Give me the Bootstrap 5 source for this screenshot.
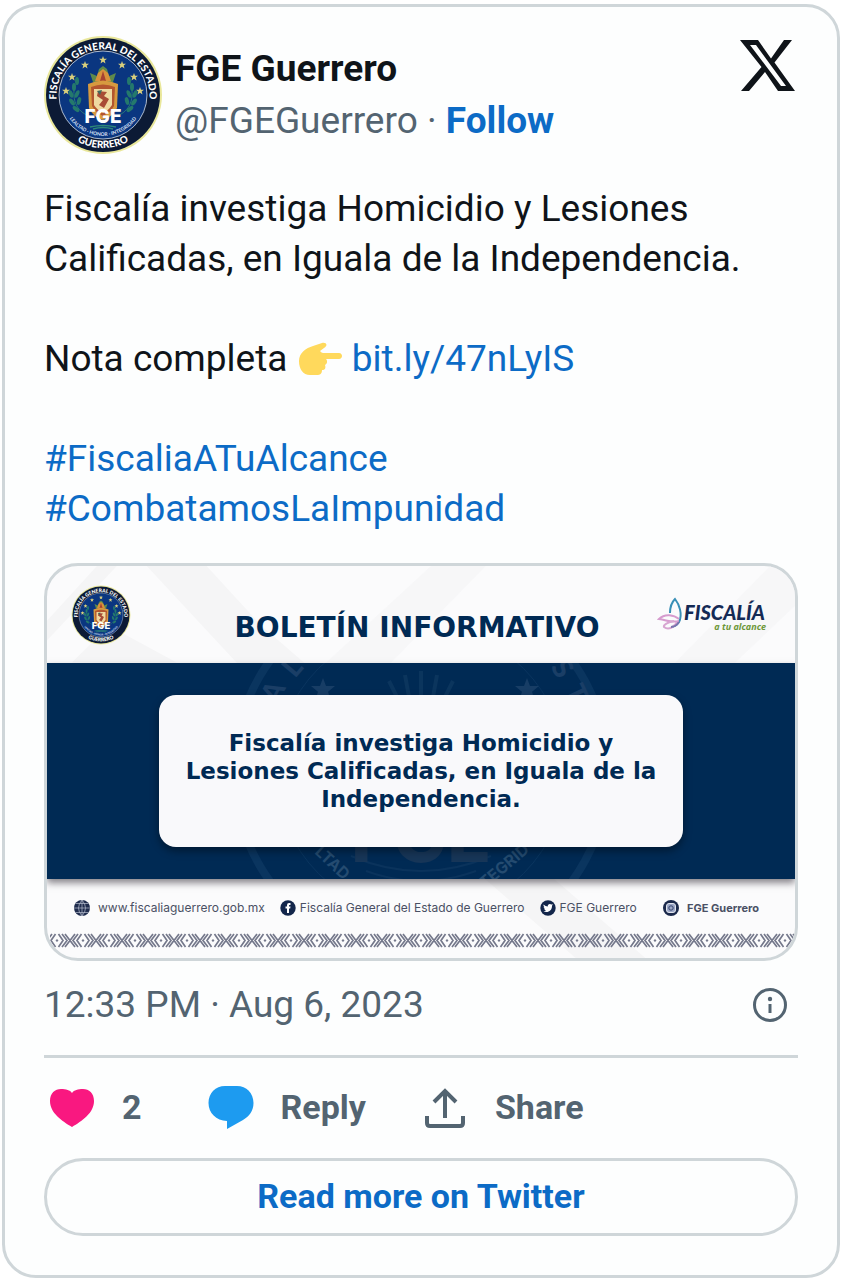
<!DOCTYPE html>
<html lang="es">
<head>
<meta charset="utf-8">
<meta name="viewport" content="width=device-width, initial-scale=1">
<title>FGE Guerrero</title>
<link href="https://cdn.jsdelivr.net/npm/bootstrap@5.3.0/dist/css/bootstrap.min.css" rel="stylesheet">
<style>
  :root { --line: #cfd6d9; --ink: #0f1419; --muted-ink: #536471; --blue: #0c6bc6; --navy: #002a54; }
  body { font-family: Roboto, sans-serif; color: var(--ink); background: #fff; }
  a { color: var(--blue); text-decoration: none; }
  .post { margin: 4px 2px 2px; padding: 28px 39px 39px; border: 3px solid var(--line); border-radius: 34px; background: #fdfefe; }
  .avatar { width: 120px; height: 120px; margin-left: -1px; }
  .author { font-size: 37px; line-height: 52px; padding-top: 8px; margin-left: 12px; }
  .author .handle { color: var(--muted-ink); }
  .x-logo { width: 56px; height: 52px; margin: 5px 2px 0 0; }
  .post-text { font-size: 37px; line-height: 50px; margin: 29px 0; }
  .hand { width: 46px; height: 36px; vertical-align: -6px; }
  .media { border: 3px solid var(--line); border-radius: 34px; overflow: hidden; background: #fbfbfc; color: var(--navy); font-family: Inter, sans-serif; }
  .media-top { height: 97px; padding: 0 28px 0 24px; }
  .media-top h2 { font: 700 28px/32px "DejaVu Sans", sans-serif; margin: 27px 0 0; padding-left: 46px; }
  .seal-sm { width: 60px; height: 60px; }
  .media-mid { background: var(--navy); padding: 32px 15%; overflow: hidden; box-shadow: 0 4px 7px rgba(40,35,45,.55); }
  .watermark { position: absolute; left: 50%; top: 50%; width: 400px; height: 400px; transform: translate(-50%, -50%); }
  .headline { background: #f9f9fb; border-radius: 17px; padding: 34px 8px; font: 700 23px/28px "DejaVu Sans", sans-serif; box-shadow: 0 4px 8px rgba(0,0,0,.4); }
  .media-links { gap: 15px; font-size: 12px; line-height: 16px; color: #4a5064; padding: 21px 36px 17px 27px; }
  .media-links .insta { font-size: 11px; }
  .media-links svg { width: 16px; height: 16px; }
  .backdrop { inset: 0; width: 100%; height: 100%; }
  .strip { height: 15px; margin: 0 0 10px 3px; display: block; width: calc(100% - 3px); }
  .meta { font-size: 37px; line-height: 50px; color: var(--muted-ink); padding: 19px 10px 25px 0; }
  .meta svg { width: 36px; height: 36px; }
  .actions { border-top: 3px solid var(--line); padding: 25px 0 27px 5px; }
  .act { display: flex; align-items: center; gap: 27px; border: 0; background: none; padding: 0; color: var(--muted-ink); font-size: 34px; line-height: 48px; font-weight: 700; }
  .act svg { width: 46px; height: 46px; }
  .reply { margin-left: 66px; }
  .share { margin-left: 56px; }
  .more { border: 3px solid var(--line); border-radius: 40px; color: var(--blue); font-size: 34px; line-height: 46px; font-weight: 700; padding: 12px 0 14px; }
</style>
</head>
<body>
<svg width="0" height="0" class="position-absolute" aria-hidden="true">
  <defs>
    <path id="arcTop" d="M13.600 64A46.500 46.500 0 1 1 106.400 64"/>
    <path id="arcBottom" d="M7 60A53 53 0 0 0 113 60"/>
    <path id="arcMotto" d="M19 60A41 41 0 0 0 101 60"/>
    <path id="star" d="M0-4 1-1.300 4-1.300 1.700.6 2.500 3.500 0 1.800-2.500 3.500-1.700.6-4-1.300-1-1.300Z"/>
    <g id="laurel">
      <path d="M49 82C35 78 28 67 32 49" fill="none" stroke="#277a78" stroke-width="1"/>
      <g fill="#24796c">
        <ellipse cx="34" cy="46" rx="2" ry="4"/><ellipse cx="31" cy="52" rx="2" ry="4"/><ellipse cx="28" cy="59" rx="2" ry="4" transform="rotate(-20 28 59)"/>
        <ellipse cx="34" cy="59" rx="2" ry="4" transform="rotate(25 34 59)"/><ellipse cx="29" cy="67" rx="2" ry="4" transform="rotate(-35 29 67)"/>
        <ellipse cx="36" cy="66" rx="2" ry="4" transform="rotate(15 36 66)"/><ellipse cx="33" cy="74" rx="2" ry="4" transform="rotate(-50 33 74)"/>
      </g>
    </g>
    <symbol id="seal" viewBox="0 0 120 120">
      <circle cx="60" cy="60" r="59" fill="#e9e79a"/>
      <circle cx="60" cy="60" r="57" fill="#0c1a35"/>
      <circle cx="60" cy="60" r="44" fill="#0a3680" stroke="#d5deea" stroke-width=".8"/>
      <g fill="#fff" font-family="Lato, sans-serif" font-weight="900">
        <text font-size="10"><textPath href="#arcTop" startOffset="50%" text-anchor="middle">FISCALÍA GENERAL DEL ESTADO</textPath></text>
        <text font-size="10"><textPath href="#arcBottom" startOffset="50%" text-anchor="middle">GUERRERO</textPath></text>
        <text font-size="5" fill="#c9d8ec"><textPath href="#arcMotto" startOffset="50%" text-anchor="middle">LEALTAD · HONOR · INTEGRIDAD</textPath></text>
      </g>
      <g fill="#d9cf7c">
        <use href="#star" x="60" y="25"/><use href="#star" x="42" y="30"/><use href="#star" x="79" y="30"/><use href="#star" x="29" y="42"/>
        <use href="#star" x="91" y="42"/><use href="#star" x="23" y="56"/><use href="#star" x="97" y="56"/>
      </g>
      <use href="#laurel"/><use href="#laurel" transform="translate(120 0) scale(-1 1)"/>
      <path d="M50 47 47 38 54 41 56 34 60 31 64 34 66 41 73 38 70 47Z" fill="#5e8a4b"/>
      <path d="M52 46 55 38 60 34 65 38 68 46Z" fill="#d8913c"/><path d="M57 46 60 36 63 46Z" fill="#a64132"/>
      <path d="M45 49Q60 42 75 49L74 73Q69 82 60 85 50 82 46 73Z" fill="#d79a3f"/>
      <path d="M48 52Q60 47 72 52L71 71Q67 78 60 81 53 78 49 71Z" fill="#b4562f"/>
      <path d="M51 54H69V70Q65 76 60 78 54 75 51 70Z" fill="#efd9a0"/>
      <path d="M55 56 64 57 61 61 66 64 61 73 56 70 60 65 54 61Z" fill="#a84b35"/><path d="M54 56 59 55 57 60Z" fill="#40695c"/>
      <path d="M47 92Q60 89 73 92M50 94Q60 91 70 94" fill="none" stroke="#2d8878" stroke-width="1.500"/>
      <text x="60" y="88" text-anchor="middle" font-family="Inter, sans-serif" font-weight="800" font-size="19" fill="#fff">FGE</text>
    </symbol>
  </defs>
</svg>

<main>
<article class="post">
  <header class="d-flex align-items-start">
    <svg class="avatar flex-shrink-0" role="img" aria-label="FGE Guerrero"><use href="#seal"/></svg>
    <div class="author flex-grow-1">
      <div class="fw-bold">FGE Guerrero</div>
      <div><span class="handle">@FGEGuerrero ·</span> <a class="fw-bold" href="#follow">Follow</a></div>
    </div>
    <a href="#x" aria-label="X"><svg class="x-logo d-block" viewBox="0 0 56 52"><path fill-rule="evenodd" fill="#0f1419" d="M0 0H18L31 18.500 44 0H52L34.500 22.500 55 51H38L25 32 9 51H1L21.500 27ZM10 5 41 46H46L16 5Z"/></svg></a>
  </header>

  <div class="post-text">
    Fiscalía investiga Homicidio y Lesiones Calificadas, en Iguala de la Independencia.<br><br>
    Nota completa <svg class="hand" viewBox="0 0 46 36" role="img" aria-label="👉"><path fill="#ffd95c" d="M2 20C2 12 9 7 16 5L25 2C30 1 31 5 27 7L23 10C24 11 25 12 26 12H42C46 12 46 18 42 18H29C31 20 30 23 28 24 29 27 28 29 25 29 25 33 23 34 20 34H13C6 34 2 28 2 20Z"/></svg> <a href="#nota">bit.ly/47nLyIS</a><br><br>
    <a href="#alcance">#FiscaliaATuAlcance</a><br>
    <a href="#impunidad">#CombatamosLaImpunidad</a>
  </div>

  <section class="media position-relative">
    <svg class="backdrop position-absolute" viewBox="0 0 750 394" preserveAspectRatio="none" aria-hidden="true"><g fill="#f5f5f6"><path d="M0 55 50 0H70L0 75ZM25 97 62 60 130 97Z"/><path d="M100 0H160L215 60 600 394H530L190 97Z"/><path d="M280 97 385 0H440L345 97ZM630 97 725 0H750V40L690 97Z" opacity=".7"/></g></svg>
    <div class="media-top position-relative d-flex align-items-center">
      <svg class="seal-sm flex-shrink-0" aria-hidden="true"><use href="#seal"/></svg>
      <h2 class="flex-grow-1 text-center">BOLETÍN INFORMATIVO</h2>
      <svg width="110" height="38" viewBox="0 0 110 38" class="flex-shrink-0" role="img" aria-label="Fiscalía a tu alcance">
        <g fill="none" stroke-width="2"><path d="M13 17C13 11 15 6 18 3 22 8 26 18 22 26 20 29 17 31 14 31" stroke="#398fb6"/><path d="M22 25C14 27 10 24 2 23 8 17 17 19 22 23" stroke="#d69bce"/><path d="M17 25C11 26 6 29 7 31 12 35 18 30 20 26" stroke="#d8a6d1"/><path d="M22 26C20 29 17 31 14 31" stroke="#7a73ad"/></g>
        <text x="27" y="24" font-family="Lato, sans-serif" font-weight="900" font-style="italic" font-size="20" fill="#142a55">FISCALÍA</text>
        <text x="109" y="34" text-anchor="end" font-family="Open Sans, sans-serif" font-weight="700" font-style="italic" font-size="9" fill="#6c9637">a tu alcance</text>
      </svg>
    </div>
    <div class="media-mid position-relative">
      <svg class="watermark" viewBox="0 0 400 400" aria-hidden="true">
        <g fill="none" stroke="#0a355f"><circle cx="200" cy="200" r="187" stroke-width="8"/><circle cx="200" cy="200" r="145" stroke-width="1"/></g>
        <g fill="#1a3e66" font-family="Lato, sans-serif" font-weight="900" font-size="28"><text transform="translate(56 134) rotate(-62)">A</text><text transform="translate(74 108) rotate(-50)">L</text><text transform="translate(329 96) rotate(58)">S</text><text transform="translate(343 119) rotate(65)">T</text></g>
        <g fill="#173d65"><use href="#star" transform="translate(102 119) scale(3)"/><use href="#star" transform="translate(306 119) scale(3)"/></g>
        <path d="M176 126 168 110M188 126 184 104M200 126V100M212 126 216 104M224 126 232 110" stroke="#0b355d" stroke-width="4"/>
        <path d="M130 285Q200 315 270 285M145 300Q200 320 255 300" fill="none" stroke="#0a335c" stroke-width="2"/>
        <text x="200" y="291" text-anchor="middle" font-weight="800" font-size="72" fill="#173658">FGE</text>
        <g fill="#244b70" font-size="16" font-weight="700"><text transform="translate(93 282) rotate(43)">LTAD</text><text transform="translate(264 318) rotate(-40)">TEGRID</text></g>
      </svg>
      <div class="headline position-relative text-center">Fiscalía investiga Homicidio y<br>Lesiones Calificadas, en Iguala de la<br>Independencia.</div>
    </div>
    <div class="media-links position-relative d-flex flex-wrap align-items-center">
      <span class="d-flex align-items-center gap-2"><svg viewBox="0 0 16 16"><circle cx="8" cy="8" r="8" fill="#1f2c4d"/><path d="M8 0V16M0 8H16M2 3.500H14M2 12.500H14M8 0Q1 8 8 16M8 0Q15 8 8 16" fill="none" stroke="#b7bfd0" stroke-width=".7"/></svg>www.fiscaliaguerrero.gob.mx</span>
      <span class="d-flex align-items-center gap-1"><svg viewBox="0 0 16 16"><circle cx="8" cy="8" r="7.700" fill="#13264b"/><path d="M7 13V8.500H5.500V6.500H7V5Q7 3 9 3H10.500V5H9.500Q9 5 9 5.500V6.500H10.500L10.200 8.500H9V13Z" fill="#fff"/></svg>Fiscalía General del Estado de Guerrero</span>
      <span class="d-flex align-items-center gap-1"><svg viewBox="0 0 16 16"><circle cx="8" cy="8" r="7.700" fill="#13264b"/><path d="M3.500 4.500Q5.500 6.500 7.800 6.600C7.400 4.500 9.800 3.200 11.300 4.600L12.900 4.200 12 5.700C12.200 9.500 9.500 12 6.500 12 5.300 12 4.300 11.700 3.500 11.200Q5.300 11.200 6 10.500 4.700 10.200 4.300 9.200L5 9.100Q3.700 8.500 3.700 7L4.500 7.200Q3.100 6 3.500 4.500Z" fill="#fff"/></svg>FGE Guerrero</span>
      <span class="insta d-flex align-items-center gap-2 fw-bold ms-auto"><svg viewBox="0 0 16 16"><circle cx="8" cy="8" r="8" fill="#1b294b"/><rect x="3.500" y="3.500" width="9" height="9" rx="2.500" fill="#9ba6c6" stroke="#e1e5ee"/><circle cx="8" cy="8" r="2.200" fill="none" stroke="#35456d"/></svg>FGE Guerrero</span>
    </div>
    <svg class="strip position-relative" aria-hidden="true"><defs><pattern id="weave" x="7" width="26" height="15" patternUnits="userSpaceOnUse"><path d="M8 1 18 14M18 1 8 14M5 1 10 7.500 5 14M21 1 16 7.500 21 14M1.500 1 6 7.500 1.500 14M24.500 1 20 7.500 24.500 14" fill="none" stroke="#74788b" stroke-width="1.700"/><path d="M0 6 1.500 7.500 0 9ZM26 6 24.500 7.500 26 9Z" fill="#74788b"/></pattern></defs><rect width="100%" height="15" fill="url(#weave)"/></svg>
  </section>

  <div class="meta d-flex align-items-center justify-content-between">
    <time datetime="2023-08-06T12:33">12:33 PM · Aug 6, 2023</time>
    <a href="#info" aria-label="Info"><svg class="d-block" viewBox="0 0 36 36"><circle cx="18" cy="18" r="15.500" fill="none" stroke="#536471" stroke-width="3"/><circle cx="18" cy="12" r="2.200" fill="#536471"/><path d="M18 17V26" stroke="#536471" stroke-width="3"/></svg></a>
  </div>

  <div class="actions d-flex align-items-center">
    <button class="act" type="button" aria-label="Like 2"><svg viewBox="0 0 46 46"><path fill="#f91880" d="M23 43C13 37 1 29 1 17 1 9 6 5 12 5 17 5 21 6 23 9 25 6 29 5 34 5 40 5 45 9 45 17 45 29 33 37 23 43Z"/></svg><span>2</span></button>
    <button class="act reply" type="button"><svg viewBox="0 0 46 46"><path fill="#1d9bf0" d="M17 2H29C38.500 2 45.500 9 45.500 19 45.500 27 41 32.500 35 36L19 45V37C8 36.500.5 29 .5 19 .5 9 7.500 2 17 2Z"/></svg><span>Reply</span></button>
    <button class="act share" type="button"><svg viewBox="0 0 46 46"><path d="M23 34V7M12 18 23 7 34 18M5 32V39Q5 42 8 42H38Q41 42 41 39V32" fill="none" stroke="#536471" stroke-width="4"/></svg><span>Share</span></button>
  </div>
  <a class="more d-block text-center" href="#more">Read more on Twitter</a>
</article>
</main>
<script src="https://cdn.jsdelivr.net/npm/bootstrap@5.3.0/dist/js/bootstrap.bundle.min.js"></script>
</body>
</html>
